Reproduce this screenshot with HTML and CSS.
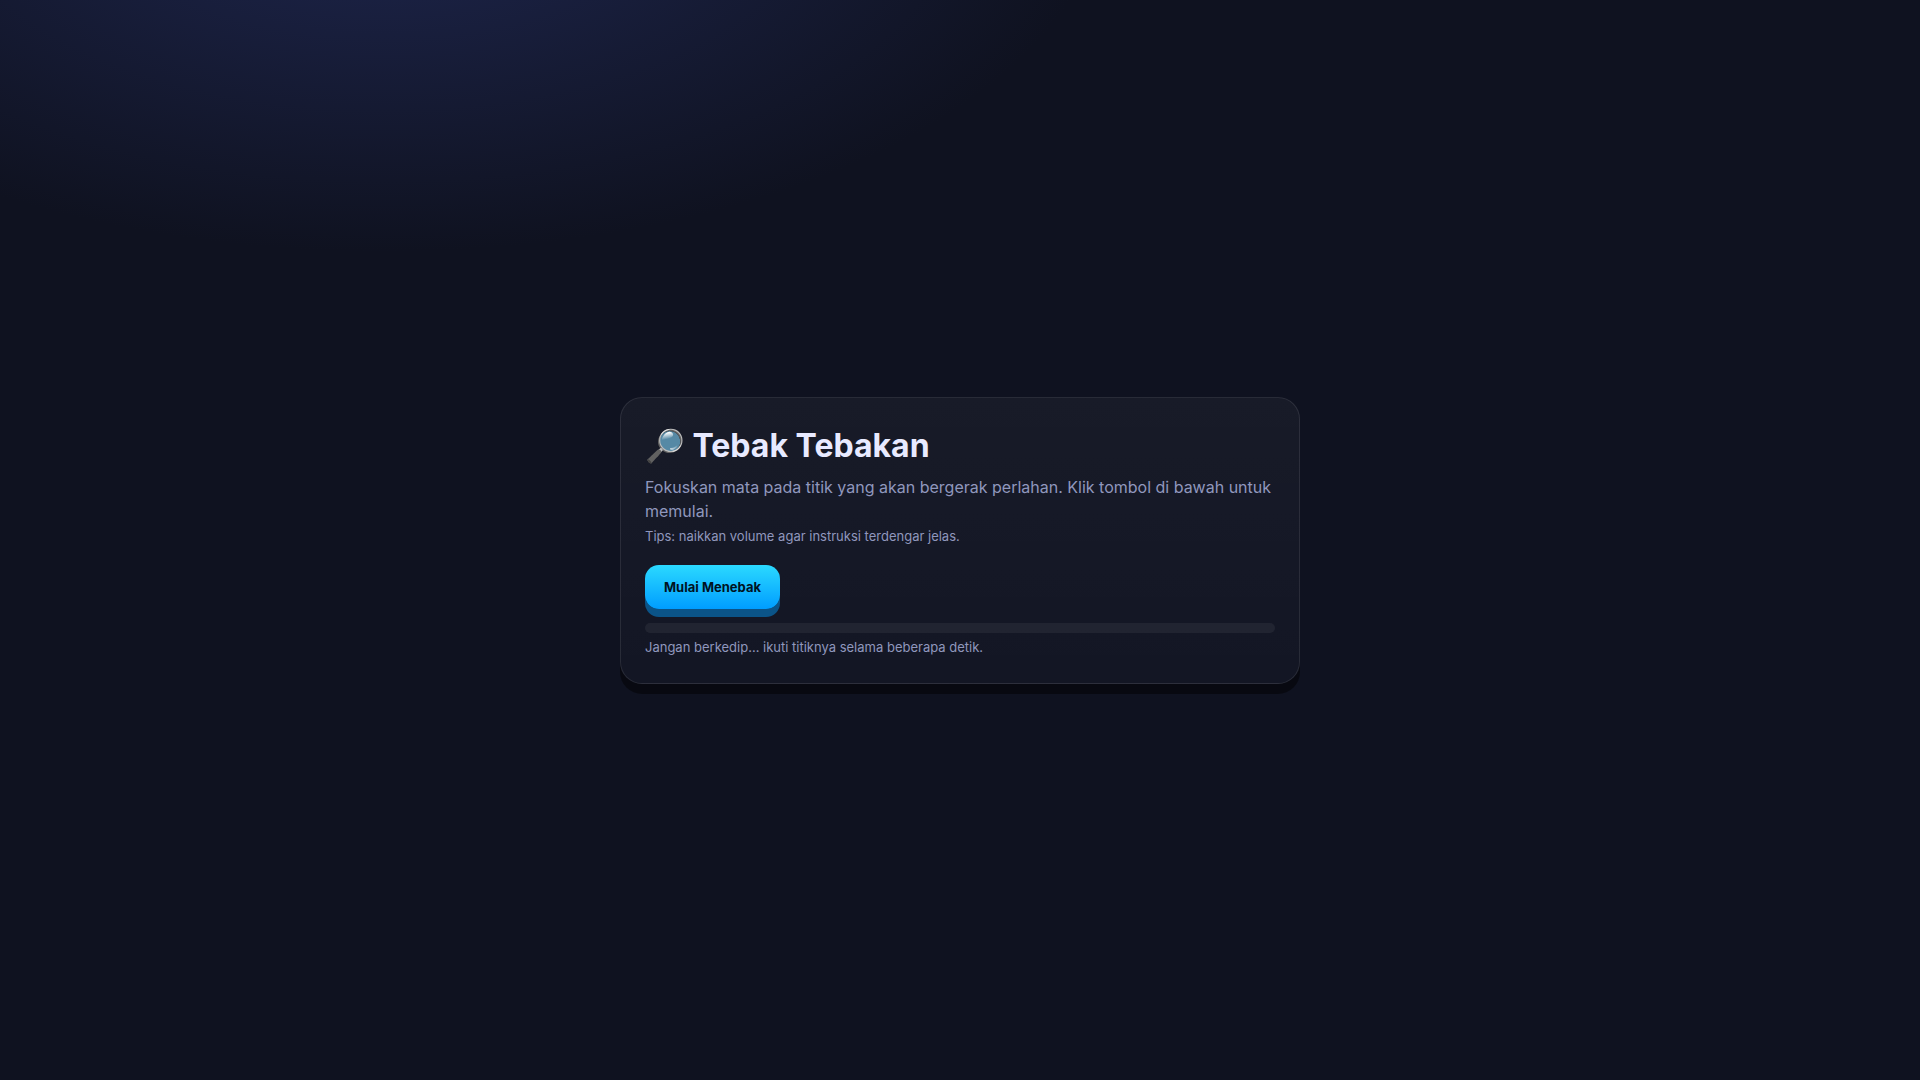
FILE: index.html
```html
<!DOCTYPE html>
<html lang="id">
<head>
    <meta charset="UTF-8">
    <meta name="viewport" content="width=device-width, initial-scale=1.0">
    <title>Tebak Tebakan</title>
    <link rel="stylesheet" href="styles.css">
</head>
<body>

    <main class="card">
        <h1>🔎 Tebak Tebakan</h1>
        <p class="lead">Fokuskan mata pada titik yang akan bergerak perlahan. Klik tombol di bawah untuk memulai.</p>
        <p class="hint">Tips: naikkan volume agar instruksi terdengar jelas.</p>
        <button type="button" class="start">Mulai Menebak</button>
        <div class="bar" role="progressbar" aria-label="Progres" aria-valuemin="0" aria-valuemax="100" aria-valuenow="0"></div>
        <p class="hint">Jangan berkedip… ikuti titiknya selama beberapa detik.</p>
    </main>

</body>
</html>
```

FILE: styles.css
```css
* { box-sizing: border-box; }
body { margin: 0; min-height: 100vh; display: grid; place-items: center; font-family: Inter, "Noto Color Emoji", sans-serif; color: #e8eaff; background: radial-gradient(1200px 600px at 20% -10%, #1e264e 0%, transparent 60%), #0f1220; }
.card { width: 92%; max-width: 680px; padding: 24px; border: 1px solid rgba(255,255,255,0.09); border-radius: 22px; background: linear-gradient(180deg, rgba(255,255,255,0.04), rgba(255,255,255,0.02)); box-shadow: 0 10px 0 rgba(0,0,0,0.45); }
h1 { margin: 0 0 6px; font-size: 32px; line-height: 47px; font-weight: 700; }
.lead { margin: 0; font-size: 16px; line-height: 24px; color: #9097bd; }
.hint { margin: 1px 0 0; font-size: 13px; line-height: 24px; color: #9097bd; }
.start { display: block; height: 44px; margin: 17px 0 14px; padding: 0 19px; border: none; border-radius: 14px; font-family: inherit; font-size: 13px; font-weight: 700; color: #00131f; background: linear-gradient(180deg, #2bd9ff, #009dff); box-shadow: 0 8px 0 #0b5488; cursor: pointer; }
.start:active { transform: translateY(4px); box-shadow: 0 4px 0 #0b5488; }
.bar { height: 10px; margin-bottom: 2px; border-radius: 6px; background: rgba(255,255,255,0.06); }
```
